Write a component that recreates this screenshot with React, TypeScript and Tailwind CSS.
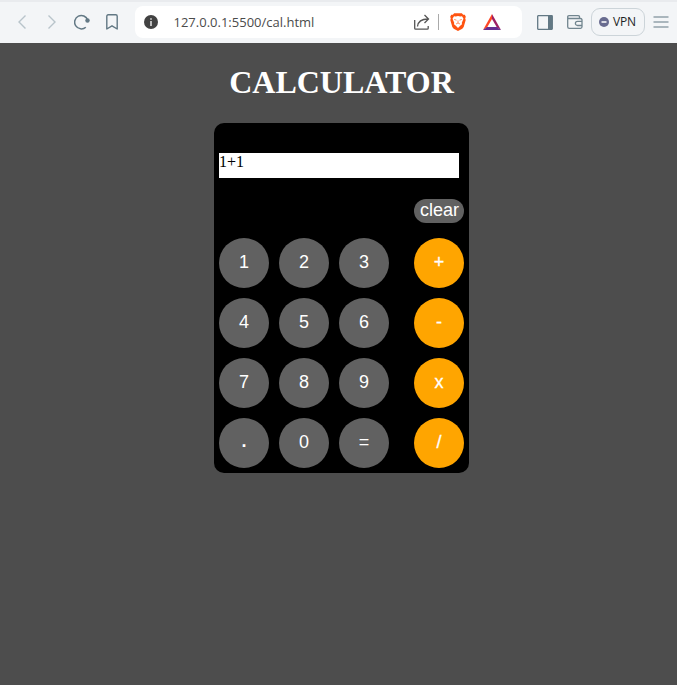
import React from "react";

const numberRows = [
  ["1", "2", "3", "+"],
  ["4", "5", "6", "-"],
  ["7", "8", "9", "x"],
  [".", "0", "=", "/"],
];

function BrowserBar() {
  return (
    <header className="flex h-[43px] w-full items-center border-t-2 border-[#e9ebee] bg-[#f3f5f7] pb-px text-[#627884]">
      <svg className="ml-[17px] h-4 w-[10px]" viewBox="0 0 10 16" fill="none" stroke="#b8c4ca" strokeWidth="1.4">
        <path d="M8.500 1.500 2 8l6.500 6.500" />
      </svg>
      <svg className="ml-5 h-4 w-[10px]" viewBox="0 0 10 16" fill="none" stroke="#b8c4ca" strokeWidth="1.4">
        <path d="M1.500 1.500 8 8l-6.500 6.500" />
      </svg>
      <svg className="ml-[17px] h-4 w-4" viewBox="0 0 16 16" fill="none" stroke="currentColor" strokeWidth="1.5">
        <path d="M11.800 13.200A6.700 6.700 0 1 1 13.700 6" />
        <circle cx="13.500" cy="6.500" r="2.200" fill="currentColor" stroke="none" />
      </svg>
      <svg className="ml-4 h-4 w-3" viewBox="0 0 12 16" fill="none" stroke="currentColor" strokeWidth="1.4" strokeLinejoin="round">
        <path d="M.8 2.200Q.8.800 2.200.800h7.600q1.400 0 1.400 1.400v12.800L6 11.800.8 15Z" />
      </svg>
      <div className="ml-[17px] flex h-8 w-[387px] items-center rounded-[8px] bg-white">
        <svg className="ml-[9px] h-[14px] w-[14px]" viewBox="0 0 14 14">
          <circle cx="7" cy="7" r="7" fill="#424242" />
          <path d="M7 3.200v1.600M7 6v5" stroke="#ddd" strokeWidth="1.600" />
        </svg>
        <span className="ml-[15.500px] w-[240px] font-['Open_Sans',sans-serif] text-[13px] leading-4 text-[#4b4b4b]">
          127.0.0.1:5500/cal.html
        </span>
        <svg className="h-4 w-4" viewBox="0 0 16 16" fill="none" stroke="#555" strokeWidth="1.300">
          <path d="M.7 6v8.200q0 1 1 1h11.500q1 0 1-1V12M3.500 12.500C4 7.500 7 5 14 5M10.500 1l4 4-4 4" />
        </svg>
        <span className="ml-2 h-4 w-px bg-[#aaa]" />
        <svg className="ml-[11px] h-[18px] w-4" viewBox="0 0 16 18">
          <path d="M4.200.3h7.600l1.400 1.500 1.600-.1 1 2-.6 1.700.5 1.600-2 7-1.400 1.800L8 18l-4.300-2.200L2.300 14l-2-7 .5-1.600-.6-1.700 1-2 1.600.1Z" fill="#ff5310" />
          <path d="m4 3.200 1.800.3L8 3l2.200.5 1.800-.3 1.500 2.500-1.700 4 .2 1.500-1.800 1.500L8 15l-2.200-2.300L4 11.200l.2-1.500-1.700-4Z" fill="#fff" />
          <path d="m4.200 6.400 2.300.8M11.800 6.400l-2.300.8M6 11l2-1 2 1M8 7.500V10" fill="none" stroke="#ff7a48" strokeWidth=".8" />
        </svg>
        <svg className="ml-[17px] h-4 w-[18px]" viewBox="0 0 18 16">
          <path d="M9 0 0 16l4.200-2.700L9 5Z" fill="#ff4724" />
          <path d="m9 0 9 16-4.200-2.700L9 5Z" fill="#9e1f63" />
          <path d="M0 16h18l-4.200-3H4.200Z" fill="#662d91" />
        </svg>
      </div>
      <svg className="ml-[15px] h-[15px] w-4" viewBox="0 0 16 15" fill="none" stroke="currentColor" strokeWidth="1.300">
        <rect x=".7" y=".7" width="14.600" height="13.600" rx=".5" />
        <path d="M11 1h4v13h-4Z" fill="currentColor" stroke="none" />
      </svg>
      <svg className="ml-[14px] h-[14px] w-4" viewBox="0 0 16 14" fill="none" stroke="#71858f" strokeWidth="1.300">
        <path d="M12.500 3.500V2q0-1.300-1.300-1.300H2Q.7.700.7 2v9.700Q.7 13.300 2.300 13.300h11.200q1.500 0 1.500-1.500V5q0-1.500-1.500-1.500H2Q.7 3.500.7 2M15 6.300h-4.500a2 2 0 0 0 0 4.200H15" />
      </svg>
      <div className="ml-2 flex h-7 w-[54px] items-center rounded-[9px] border border-[#ccd4d9] pl-[7px]">
        <svg className="h-[10px] w-[10px]" viewBox="0 0 10 10">
          <circle cx="5" cy="5" r="5" fill="#686b8f" />
          <path d="M2.500 5h5" stroke="#fff" strokeWidth="1.500" />
        </svg>
        <span className="ml-1 font-['Open_Sans',sans-serif] text-[12px] leading-4 tracking-[-0.200px] text-[#1d1f25]">VPN</span>
      </div>
      <svg className="ml-2 h-3 w-4" viewBox="0 0 16 12" stroke="currentColor" strokeWidth="1.200">
        <path d="M.5 1h15M.5 6h15M.5 11h15" />
      </svg>
    </header>
  );
}

export default function App() {
  return (
    <div className="flex h-[685px] w-[677px] flex-col overflow-hidden bg-[#4d4d4d]">
      <BrowserBar />
      <main className="flex flex-col items-center pl-[6px]">
        <h1 className="mt-[21px] font-['Liberation_Serif',serif] text-[32px] leading-[37px] font-bold text-white">CALCULATOR</h1>
        <section className="mt-[22px] h-[350px] w-[255px] rounded-[10px] bg-black px-[5px] pt-[30px] font-['Liberation_Sans',sans-serif]">
          <div className="h-[25px] w-60 bg-white font-['Liberation_Serif',serif] text-[16px] leading-[18px] text-black">1+1</div>
          <div className="mt-[21px] flex justify-end">
            <button className="flex h-6 w-[50px] items-center justify-center rounded-full bg-[#616161] pb-[2px] pl-px text-[18px] leading-5 text-white">clear</button>
          </div>
          <div className="mt-[15px] flex flex-col gap-[10px]">
            {numberRows.map((row) => (
              <div key={row[0]} className="flex gap-[10px]">
                {row.map((label, index) => (
                  <button
                    key={label}
                    className={`flex h-[50px] w-[50px] items-center justify-center rounded-full text-[18px] leading-5 text-white ${index === 3 ? "ml-[15px] bg-[#ffa500] [-webkit-text-stroke:0.3px_white]" : "bg-[#616161]"} ${label === "." ? "pb-1 font-bold" : "pb-[2px]"}`}
                  >
                    {label}
                  </button>
                ))}
              </div>
            ))}
          </div>
        </section>
      </main>
    </div>
  );
}
